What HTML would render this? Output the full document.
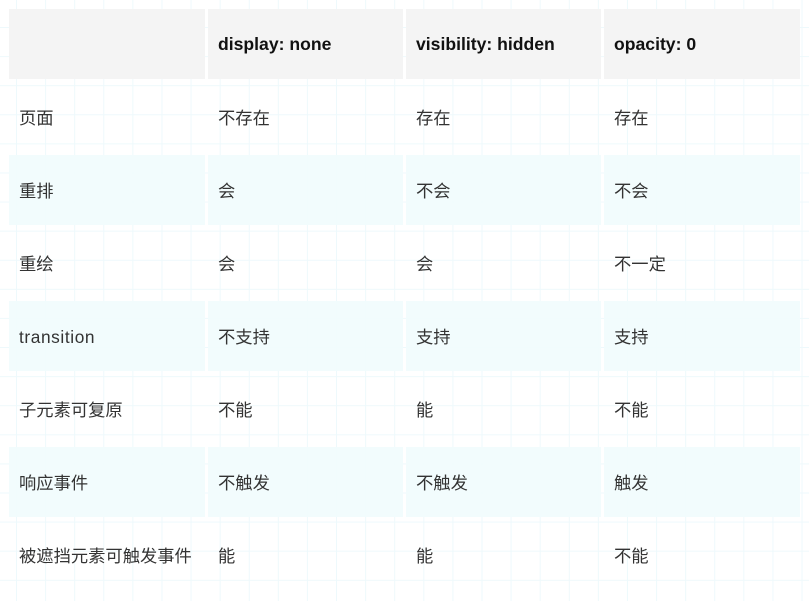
<!DOCTYPE html>
<html><head><meta charset="utf-8"><style>
html,body{margin:0;padding:0}
body{width:809px;height:601px;overflow:hidden;position:relative;background-color:#fff;
background-image:linear-gradient(to right,#eef9fc 1px,transparent 1px),linear-gradient(to bottom,#eef9fc 1px,transparent 1px);
background-size:29.1px 29.1px;background-position:16px 27px;
font-family:"Liberation Sans","Noto Sans CJK SC",sans-serif;font-size:17.3px;color:#333}
.c{position:absolute;height:70px;line-height:72px;padding-left:10px;box-sizing:border-box;white-space:nowrap}
.h{background:#f4f4f4;font-weight:bold;color:#111;font-size:17.6px;line-height:70px}
.s{background:rgba(241,252,253,0.92)}
</style></head><body>
<div id="t"></div>
<script>
var rows=[["","display: none","visibility: hidden","opacity: 0"],
["页面","不存在","存在","存在"],["重排","会","不会","不会"],["重绘","会","会","不一定"],
["<span style='letter-spacing:0.6px'>transition</span>","不支持","支持","支持"],["子元素可复原","不能","能","不能"],
["响应事件","不触发","不触发","触发"],["被遮挡元素可触发事件","能","能","不能"]];
var xs=[9,208,406,604],ws=[196,195,195,196],h='';
rows.forEach(function(r,i){var y=9+i*73;r.forEach(function(t,j){
var cls=i==0?'h':(i%2==0?'s':'');
h+='<div class="c '+cls+'" style="left:'+xs[j]+'px;top:'+y+'px;width:'+ws[j]+'px">'+t+'</div>';});});
document.getElementById('t').innerHTML=h;
</script>
</body></html>
